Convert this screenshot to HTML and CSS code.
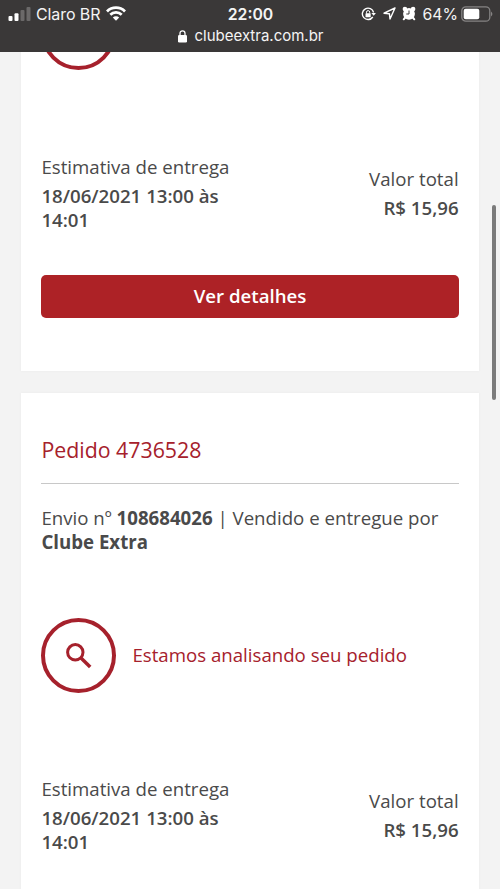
FILE: index.html
```html
<!DOCTYPE html>
<html lang="pt-BR">
<head>
<meta charset="utf-8">
<title>Clube Extra</title>
<link rel="stylesheet" href="styles.css">
</head>
<body>
<div class="phone">
  <header class="browser-bar">
    <div class="status">
      <div class="carrier">
        <svg class="signal" width="24" height="15" viewBox="0 0 24 15"><g fill="#fff"><rect x="0.5" y="10" width="4" height="5" rx="1"/><rect x="6.5" y="7.3" width="4" height="7.7" rx="1"/></g><g fill="#6b6969"><rect x="12.5" y="4" width="4" height="11" rx="1"/><rect x="18.5" y="1" width="4" height="14" rx="1"/></g></svg>
        <span>Claro BR</span>
        <svg class="wifi" width="20" height="15" viewBox="0 0 20 15" fill="none" stroke="#fff" stroke-width="2.8"><path d="M1 5.4A12.8 12.8 0 0 1 19 5.4"/><path d="M4.3 8.8A8.1 8.1 0 0 1 15.7 8.8"/><path d="M6.8 11.5A4.6 4.6 0 0 1 13.2 11.5L10 14.8Z" fill="#fff" stroke="none"/></svg>
      </div>
      <span class="clock">22:00</span>
      <div class="indicators">
        <svg class="rotation" width="15" height="14" viewBox="0 0 15 14" fill="none" stroke="#fff"><path d="M11.8 10A5.7 5.7 0 1 1 12.6 5.5" stroke-width="1.4"/><path d="M10.3 6H14.9L12.7 8.7Z" fill="#fff" stroke="none"/><rect x="4.5" y="6.3" width="5.2" height="4" rx=".6" fill="#fff" stroke="none"/><path d="M5.5 6.5V5.2a1.6 1.6 0 0 1 3.2 0v1.3"/></svg>
        <svg class="location" width="13" height="13" viewBox="0 0 13 13" fill="none" stroke="#fff" stroke-width="1.4" stroke-linejoin="round"><path d="M12 1L1 6.2L6.4 6.7L7 12Z"/></svg>
        <svg class="alarm" width="14" height="15" viewBox="0 0 14 15"><g fill="#fff"><circle cx="7" cy="7.8" r="5.9"/><circle cx="2.9" cy="3.1" r="2.3"/><circle cx="11.1" cy="3.1" r="2.3"/></g><path d="M3.2 11.5L1.7 13.3M10.8 11.5L12.3 13.3" stroke="#fff" stroke-width="2" stroke-linecap="round"/><path d="M7 4.5V8H4.3" fill="none" stroke="#3a3838" stroke-width="1"/></svg>
        <span class="charge">64%</span>
        <svg class="battery" width="32" height="16" viewBox="0 0 32 16"><rect x=".8" y=".8" width="28" height="14.4" rx="4" fill="none" stroke="#858383" stroke-width="1.3"/><rect x="2.7" y="2.7" width="15.6" height="10.6" rx="2" fill="#fff"/><path d="M30 5.5Q32.8 8 30 10.5Z" fill="#858383"/></svg>
      </div>
    </div>
    <div class="address">
      <svg width="9" height="13" viewBox="0 0 9 13"><rect x="0" y="5" width="9" height="7.5" rx="1.3" fill="#fff"/><path d="M2 5.5V3.3a2.5 2.5 0 0 1 5 0v2.2" fill="none" stroke="#fff" stroke-width="1.3"/></svg>
      <span>clubeextra.com.br</span>
    </div>
  </header>

  <main class="orders">
    <section class="card card-scrolled">
      <div class="progress"><div class="ring"></div></div>
      <div class="summary">
        <div class="delivery"><p>Estimativa de entrega</p><p class="value">18/06/2021 13:00 às<br>14:01</p></div>
        <div class="total"><p>Valor total</p><p class="value">R$ 15,96</p></div>
      </div>
      <button class="details">Ver detalhes</button>
    </section>

    <section class="card card-current">
      <h2>Pedido 4736528</h2>
      <p class="shipment">Envio nº <b>108684026</b> | Vendido e entregue por<br><b>Clube Extra</b></p>
      <div class="progress">
        <div class="ring">
          <svg width="26" height="26" viewBox="0 0 26 26" fill="none" stroke="#a6212c"><circle cx="9.3" cy="9.3" r="7.7" stroke-width="3"/><path d="M15 15L24.2 24" stroke-width="3.5"/></svg>
        </div>
        <span class="state">Estamos analisando seu pedido</span>
      </div>
      <div class="summary">
        <div class="delivery"><p>Estimativa de entrega</p><p class="value">18/06/2021 13:00 às<br>14:01</p></div>
        <div class="total"><p>Valor total</p><p class="value">R$ 15,96</p></div>
      </div>
    </section>
  </main>
  <div class="scroll-thumb"></div>
</div>
</body>
</html>
```
FILE: styles.css
```css
* { box-sizing: border-box; }
body, p, h2 { margin: 0; }
body { background: #f3f3f3; font-family: "Open Sans", sans-serif; color: #4a4a4a; }
.phone { position: relative; height: 889px; overflow: hidden; display: flex; flex-direction: column; }

.browser-bar { flex: none; height: 52px; background: #3a3838; color: #f4f4f4; font-family: Inter, sans-serif; font-size: 16px; z-index: 1; }
.status { display: grid; grid-template-columns: 1fr auto 1fr; height: 27px; align-items: center; padding: 0 7px 0 8px; }
.carrier, .indicators { display: flex; align-items: center; }
.carrier span { margin: 0 6px 0 4px; font-size: 16px; letter-spacing: -.1px; }
.signal { margin-top: -1px; }
.wifi { margin-top: -1px; }
.clock { font-weight: 600; font-size: 15.8px; padding-top: 2px; }
.indicators { justify-content: flex-end; }
.location { margin-left: 7px; }
.alarm { margin-left: 6px; margin-top: -1px; }
.charge { margin: 0 3px 0 6px; padding-top: 1px; font-size: 15.8px; }
.address { display: flex; justify-content: center; align-items: center; gap: 7px; height: 17px; font-size: 15px; padding-left: 2px; }
.address svg { margin-top: 1px; }

.orders { flex: 1; padding: 0 21.4px; display: flex; flex-direction: column; gap: 21.5px; }
.card { flex: none; padding: 43.5px 20px 0; background: #fff; font-size: 18.67px; line-height: 24px; box-shadow: 0 0 3px rgba(0,0,0,.04); }
.card-scrolled { height: 376px; margin-top: -57px; padding-top: 0; }
.card-current { height: 520px; }
.progress { display: flex; align-items: center; gap: 16px; height: 75px; color: #a6212c; }
.ring { width: 75px; height: 75px; border: 4px solid #a6212c; border-radius: 50%; display: flex; align-items: center; justify-content: center; }
.state { margin-top: -1px; }
.summary { display: flex; justify-content: space-between; align-items: center; margin-top: 85px; }
.card-current .summary { margin-top: 84px; }
.value { margin-top: 5px; font-weight: 600; }
.total { text-align: right; }
.details { display: block; width: 100%; height: 43px; margin-top: 43px; padding: 0 0 2px; border: 0; border-radius: 5px; background: #ad2226; color: #fff; font: 600 18.67px/24px "Open Sans", sans-serif; }
h2 { padding-bottom: 19px; border-bottom: 1px solid #c8c8c8; font-size: 21.33px; line-height: 28px; font-weight: 400; color: #a6212c; }
.shipment { margin: 22px 0 64px; white-space: nowrap; }
.scroll-thumb { position: absolute; top: 205px; right: 4px; width: 4px; height: 195px; border-radius: 2px; background: #7b7b7b; }
```
